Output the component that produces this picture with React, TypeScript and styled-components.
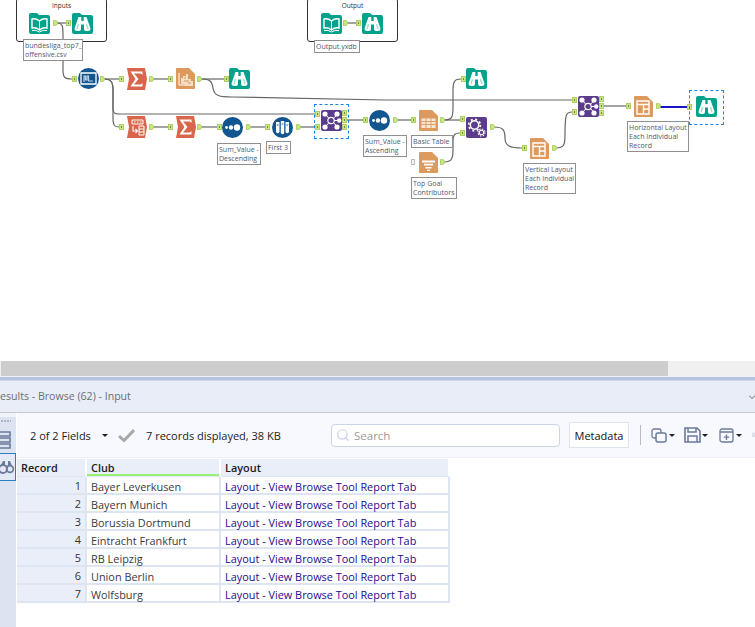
import React from "react";
import styled, { createGlobalStyle } from "styled-components";
import { Search } from "lucide-react";

const GlobalStyle = createGlobalStyle`
	html, body {
		margin: 0;
		padding: 0;
		background: #fff;
	}
	* {
		box-sizing: border-box;
	}
`;

const Page = styled.div`
	width: 755px;
	height: 627px;
	overflow: hidden;
	display: flex;
	flex-direction: column;
	font-family: "Open Sans", "Liberation Sans", sans-serif;
	background: #fff;
`;

/* workflow canvas */
const Canvas = styled.div`
	position: relative;
	height: 361px;
	flex: none;
	overflow: hidden;
`;

const Wires = styled.svg`
	position: absolute;
	left: 0;
	top: 0;
`;

const Container = styled.div<{ $x: number; $w: number }>`
	position: absolute;
	left: ${(p) => p.$x}px;
	top: -2px;
	width: ${(p) => p.$w}px;
	height: 44px;
	border: 1.5px solid #333;
	border-radius: 3px;
	text-align: center;
	font-size: 6.5px;
	line-height: 8px;
	padding-top: 3px;
	color: #333;
`;

const Node = styled.div<{ $x: number; $y: number }>`
	position: absolute;
	left: ${(p) => p.$x}px;
	top: ${(p) => p.$y}px;
	display: flex;
`;

const Port = styled.div<{ $x: number; $y: number; $out?: boolean }>`
	position: absolute;
	left: ${(p) => p.$x}px;
	top: ${(p) => p.$y - 3}px;
	width: 5px;
	height: 6px;
	background: #cbe683;
	border: 1px solid #acd267;
	border-radius: ${(p) => (p.$out ? "0 3px 3px 0" : "0")};
	&::after {
		content: "";
		display: ${(p) => (p.$out ? "none" : "block")};
		width: 1px;
		height: 2px;
		margin: 1px;
		background: #6f8c3c;
	}
`;

const EmptyPort = styled.div`
	position: absolute;
	left: 411px;
	top: 159px;
	width: 4px;
	height: 6px;
	border: 1px solid #bbb;
	background: #f4f4f4;
`;

const Label = styled.div<{ $x: number; $y: number; $w: number }>`
	position: absolute;
	left: ${(p) => p.$x}px;
	top: ${(p) => p.$y}px;
	width: ${(p) => p.$w}px;
	border: 1px solid #8f8f8f;
	background: #fff;
	padding: 1px;
	font-size: 7px;
	line-height: 9px;
	color: #4f5a6e;
	white-space: pre;
	overflow: hidden;
`;

const Selection = styled.div<{ $x: number; $y: number }>`
	position: absolute;
	left: ${(p) => p.$x}px;
	top: ${(p) => p.$y}px;
	width: 35px;
	height: 35px;
	border: 1px dashed #1f86e0;
`;

/* scroll bar */
const ScrollTrack = styled.div`
	height: 16px;
	flex: none;
	background: #f0f0f0;
	padding-left: 1px;
`;

const ScrollThumb = styled.div`
	width: 667px;
	height: 15px;
	background: #cdcdcd;
`;

const Splitter = styled.div`
	height: 4px;
	flex: none;
	background: #b5c4e1;
	border-bottom: 1px solid #cfd8ea;
`;

/* results panel */
const ResultsHeader = styled.div`
	height: 32px;
	flex: none;
	background: #e9edf8;
	border-bottom: 1px solid #c9c9c9;
	display: flex;
	align-items: center;
	justify-content: space-between;
	overflow: hidden;
`;

const ResultsTitle = styled.div`
	font-size: 10.6px;
	color: #6d6d6d;
	margin-top: -1px;
`;

const Body = styled.div`
	flex: 1;
	display: flex;
	background: #fff;
	min-height: 0;
`;

const Rail = styled.div`
	width: 16px;
	flex: none;
	background: #dde3f0;
	padding-top: 3px;
	display: flex;
	flex-direction: column;
	border-top: 4px solid #f2f4fb;
`;

const Grip = styled.div`
	width: 10px;
	height: 2px;
	margin-left: 1px;
	background: repeating-linear-gradient(90deg, #aeb4c2 0 2px, transparent 2px 3px);
`;

const RailList = styled.svg`
	margin-top: 9px;
	display: block;
`;

const RailActive = styled.div`
	margin-top: 4px;
	height: 28px;
	width: 16px;
	border: 1px solid #2a7ec4;
	border-left: 0;
	background: #e4e9f5;
	display: flex;
	align-items: center;
	overflow: hidden;
`;

const Main = styled.div`
	flex: 1;
	min-width: 0;
	padding-left: 1px;
	display: flex;
	flex-direction: column;
`;

const Toolbar = styled.div`
	height: 45px;
	flex: none;
	background: #f7f9fe;
	border-bottom: 1px solid #edf0f7;
	display: flex;
	align-items: center;
	padding: 0 0 0 13px;
	font-size: 11px;
	color: #222;
	overflow: hidden;
`;

const Caret = styled.span<{ $ml?: number }>`
	width: 0;
	height: 0;
	flex: none;
	margin-left: ${(p) => p.$ml ?? 3}px;
	border-left: 3px solid transparent;
	border-right: 3px solid transparent;
	border-top: 3px solid #222;
`;

const Fields = styled.span`
	width: 63px;
	flex: none;
	white-space: nowrap;
`;

const Check = styled.svg`
	margin-left: 10px;
	flex: none;
`;

const Records = styled.span`
	margin-left: 11px;
	width: 185px;
	flex: none;
	white-space: nowrap;
`;

const SearchBox = styled.div`
	width: 229px;
	height: 23px;
	flex: none;
	background: #fff;
	border: 1px solid #ccd5e8;
	border-radius: 4px;
	display: flex;
	align-items: center;
	gap: 4px;
	padding-left: 4px;
	color: #9a9a9a;
	font-size: 11.5px;
`;

const MetadataButton = styled.div`
	width: 60px;
	height: 26px;
	flex: none;
	margin-left: 9px;
	background: #fff;
	border: 1px solid #dde3f0;
	display: flex;
	align-items: center;
	justify-content: center;
	font-size: 11px;
	color: #111;
`;

const Separator = styled.div`
	width: 1px;
	height: 20px;
	flex: none;
	margin: 0 10px 0 11px;
	background: #bcbcbc;
`;

const ToolGroup = styled.div<{ $mr: number }>`
	display: flex;
	align-items: center;
	flex: none;
	margin-right: ${(p) => p.$mr}px;
`;

const Table = styled.div`
	margin-top: 1px;
	display: grid;
	grid-template-columns: 70px 134px 229px;
	grid-auto-rows: 18px;
	width: 433px;
	font-size: 10.9px;
`;

const HeadCell = styled.div<{ $sorted?: boolean }>`
	background: #e9eef9;
	border-right: 2px solid #fff;
	border-bottom: 1px solid #dde4f2;
	padding-left: 4px;
	line-height: 18px;
	font-weight: 600;
	color: #222;
	box-shadow: ${(p) => (p.$sorted ? "inset 0 -2px 0 #9bef7c" : "none")};
`;

const RowNumber = styled.div`
	background: #e9eef9;
	border-right: 2px solid #dde4f2;
	border-bottom: 2px solid #dde4f2;
	text-align: right;
	padding-right: 4px;
	line-height: 18px;
	color: #333;
`;

const Cell = styled.div<{ $link?: boolean }>`
	background: #fff;
	border-right: 2px solid #dde4f2;
	border-bottom: 2px solid #dde4f2;
	padding: 1px 0 0 4px;
	line-height: 18px;
	white-space: nowrap;
	color: ${(p) => (p.$link ? "#230a8e" : "#3a3a44")};
`;

const TEAL = "#04a28c";
const RED = "#d9664a";
const ORANGE = "#dd9a5c";
const BLUE = "#13558f";
const PURPLE = "#5b3c8c";

const folder = "M0 2Q0 0 2 0H8L10 2H19Q21 2 21 4V19Q21 21 19 21H2Q0 21 0 19Z";
const banner = "M1 0H19L21 11L19 22H1L3 11Z";
const page = "M0 1Q0 0 1 0H13L19 6V20Q19 21 18 21H1Q0 21 0 20Z";

const icons: Record<string, React.ReactNode> = {
	book: (
		<svg width="21" height="21" viewBox="0 0 21 21">
			<path d={folder} fill={TEAL} />
			<path d="M3 6Q7 5 10.5 8Q14 5 18 6V15Q14 14 10.5 17Q7 14 3 15Z" fill="none" stroke="#fff" strokeWidth="1.4" />
			<path d="M10.5 8V17M3 17.5Q7 16.5 10.5 19Q14 16.5 18 17.5" fill="none" stroke="#fff" strokeWidth="1" />
		</svg>
	),
	browse: (
		<svg width="21" height="21" viewBox="0 0 21 21">
			<path d={folder} fill={TEAL} />
			<path
				d="M6.5 4H9.3V8H11.7V4H14.5L18.5 15.5Q18.5 18 15.5 18H14Q12 18 12 16V11.5H9V16Q9 18 7 18H5.5Q2.5 18 2.5 15.5Z"
				fill="#fff"
			/>
			<path d="M6.5 11L5 16M14.5 11L16 16" stroke="#9fdcd2" strokeWidth="1.3" />
		</svg>
	),
	dynamic: (
		<svg width="21" height="21" viewBox="0 0 21 21">
			<circle cx="10.5" cy="10.5" r="10.5" fill={BLUE} />
			<path d="M3 5H18V16H3Z" fill="none" stroke="#fff" strokeWidth="1.3" />
			<path d="M6 14V8H7.5V12H9V8H10.5V13H15" fill="none" stroke="#b9d3ea" strokeWidth="1.2" />
		</svg>
	),
	sigma: (
		<svg width="21" height="22" viewBox="0 0 21 22">
			<path d={banner} fill={RED} />
			<path d="M4.5 3.5H16.5V7L15 5.5H8L12.5 11L8 16.5H15L16.5 15V18.5H4.5L9.5 11Z" fill="#fff" />
		</svg>
	),
	crosstab: (
		<svg width="21" height="22" viewBox="0 0 21 22">
			<path d={banner} fill={RED} />
			<path d="M6 4H17V8H6Z" fill="none" stroke="#fff" strokeWidth="1" />
			<path d="M8 6H9.5M11 6H12.5M14 6H15.5" stroke="#fff" strokeWidth="1.2" />
			<path d="M7 10V15H11M9.5 13L11.5 15L9.5 17" fill="none" stroke="#fff" strokeWidth="1.1" />
			<path d="M13 10H18V19H13ZM13 13H18M13 16H18" fill="none" stroke="#fff" strokeWidth="1" />
		</svg>
	),
	report: (
		<svg width="19" height="21" viewBox="0 0 19 21">
			<path d={page} fill={ORANGE} />
			<path d="M3 5V17H13" fill="none" stroke="#fff" strokeWidth="1" />
			<path d="M5 16V10H7V8H10V6H12V11H15V13H17V18H8V16Z" fill="#f5dcc3" />
			<path d="M8 10H10M8 13H13M12 15H15" stroke={ORANGE} strokeWidth="1" />
		</svg>
	),
	table: (
		<svg width="19" height="21" viewBox="0 0 19 21">
			<path d={page} fill={ORANGE} />
			<path d="M2.5 8.5H16.5V18H2.5Z" fill="#f7e6d4" />
			<path d="M2.5 11.5H16.5M2.5 14.5H16.5M7 8.5V18M12 8.5V18" stroke={ORANGE} strokeWidth="0.9" />
		</svg>
	),
	summary: (
		<svg width="19" height="21" viewBox="0 0 19 21">
			<path d={page} fill={ORANGE} />
			<path d="M3 8.5H16V10.5H3ZM5 11.8H14V13.6H5ZM6.5 15H12.5V16.6H6.5ZM8 17.8H11V19H8Z" fill="#fff" />
		</svg>
	),
	layout: (
		<svg width="19" height="21" viewBox="0 0 19 21">
			<path d={page} fill={ORANGE} />
			<path d="M3 5H15V18H3Z" fill="none" stroke="#fff" strokeWidth="1.4" />
			<path d="M3 8.5H15M9.5 8.5V18M9.5 13H15" stroke="#fff" strokeWidth="1.4" />
		</svg>
	),
	sort: (
		<svg width="21" height="21" viewBox="0 0 21 21">
			<circle cx="10.5" cy="10.5" r="10.5" fill={BLUE} />
			<circle cx="4.5" cy="10.5" r="1.4" fill="#fff" />
			<circle cx="9" cy="10.5" r="2.2" fill="#fff" />
			<circle cx="15" cy="10.5" r="3.2" fill="#fff" />
		</svg>
	),
	sample: (
		<svg width="21" height="21" viewBox="0 0 21 21">
			<circle cx="10.5" cy="10.5" r="10.5" fill={BLUE} />
			<path d="M4 5H7.5V15Q5.75 17.5 4 15ZM8.8 4H12.2V16Q10.5 18.5 8.8 16ZM13.5 5H17V15Q15.25 17.5 13.5 15Z" fill="#fff" />
			<path d="M4.8 8H6.7M9.6 7H11.4M14.3 8H16.2" stroke={BLUE} strokeWidth="0.9" />
		</svg>
	),
	union: (
		<svg width="21" height="21" viewBox="0 0 21 21">
			<rect width="21" height="21" rx="2" fill={PURPLE} />
			<path d="M4 4L10 10.5L4 17M17 4L10 10.5L17 17M10 10.5H19" stroke="#fff" strokeWidth="1" fill="none" />
			<circle cx="4" cy="4" r="2.6" fill="#fff" />
			<circle cx="4" cy="17" r="2.6" fill="#fff" />
			<circle cx="16" cy="4" r="2.6" fill="#fff" />
			<circle cx="16" cy="17" r="2.6" fill="#fff" />
			<circle cx="18.2" cy="10.5" r="2.2" fill="#fff" />
			<circle cx="10" cy="10.5" r="3.2" fill={PURPLE} stroke="#fff" strokeWidth="1.2" />
		</svg>
	),
	gear: (
		<svg width="21" height="21" viewBox="0 0 21 21">
			<rect width="21" height="21" rx="2" fill={PURPLE} />
			<circle cx="8.5" cy="8" r="4.2" fill="none" stroke="#fff" strokeWidth="1.5" />
			<circle cx="8.5" cy="8" r="5.8" fill="none" stroke="#fff" strokeWidth="1.7" strokeDasharray="2 2.55" />
			<circle cx="15.5" cy="15.5" r="2.2" fill="none" stroke="#fff" strokeWidth="1.1" />
			<circle cx="15.5" cy="15.5" r="3.5" fill="none" stroke="#fff" strokeWidth="1.1" strokeDasharray="1.4 1.35" />
		</svg>
	),
};

const nodes = [
	{ icon: "book", x: 29, y: 13 },
	{ icon: "browse", x: 72, y: 13 },
	{ icon: "book", x: 321, y: 13 },
	{ icon: "browse", x: 362, y: 13 },
	{ icon: "dynamic", x: 78, y: 68 },
	{ icon: "sigma", x: 126, y: 68 },
	{ icon: "report", x: 176, y: 68 },
	{ icon: "browse", x: 229, y: 68 },
	{ icon: "crosstab", x: 126, y: 116 },
	{ icon: "sigma", x: 175, y: 116 },
	{ icon: "sort", x: 222, y: 117 },
	{ icon: "sample", x: 272, y: 117 },
	{ icon: "union", x: 321, y: 110 },
	{ icon: "sort", x: 369, y: 110 },
	{ icon: "table", x: 419, y: 110 },
	{ icon: "summary", x: 419, y: 152 },
	{ icon: "browse", x: 466, y: 68 },
	{ icon: "gear", x: 466, y: 117 },
	{ icon: "layout", x: 530, y: 138 },
	{ icon: "union", x: 578, y: 96 },
	{ icon: "layout", x: 634, y: 96 },
	{ icon: "browse", x: 696, y: 96 },
];

// [x, y, isOutput]
const ports: [number, number, boolean][] = [
	[53, 23, true], [66, 23, false], [343, 23, true], [356, 23, false],
	[72, 79, false], [100, 79, true], [119, 79, false], [149, 79, true],
	[168, 79, false], [197, 79, true], [224, 79, false],
	[119, 127, false], [149, 127, true], [168, 127, false], [197, 127, true],
	[217, 127, false], [246, 127, true], [265, 127, false], [296, 127, true],
	[315, 114, false], [315, 127, false], [342, 113, false], [342, 120, false], [342, 127, false],
	[363, 120, false], [393, 120, true], [411, 120, false], [440, 120, true],
	[440, 162, true], [461, 79, false], [460, 119, false], [460, 133, false], [490, 127, true],
	[522, 148, false], [552, 148, true], [572, 100, false], [572, 112, false],
	[599, 99, false], [599, 106, false], [599, 113, false],
	[626, 106, false], [656, 106, true], [687, 107, false],
];

const wires = [
	"M56 23H66",
	"M56 23C63 23 63 26 63 35V70C63 78 65 79 72 79",
	"M347 23H356",
	"M104 79H119",
	"M104 79C111 79 113 82 113 90V108C113 113 114 114 120 114H315",
	"M104 79C111 79 113 82 113 90V118C113 126 115 127 119 127",
	"M153 79H168",
	"M201 79H224",
	"M201 79C211 79 212 82 213 88C214 96 220 97 232 97L385 100H572",
	"M153 127H168",
	"M201 127H217",
	"M250 127H265",
	"M300 127H315",
	"M347 120H363",
	"M397 120H411",
	"M444 120H460",
	"M444 120C452 120 453 117 453 108V90C453 81 455 79 461 79",
	"M444 162C452 162 453 158 453 150V142C453 134 455 133 460 133",
	"M494 127C503 127 505 130 505 138C505 146 510 148 522 148",
	"M556 148C564 148 565 145 565 135C565 114 566 112 572 112",
	"M603 106H626",
];

const labels = [
	{ x: 23, y: 39, w: 60, text: "bundesliga_top7_\noffensive.csv" },
	{ x: 314, y: 40, w: 46, text: "Output.yxdb" },
	{ x: 217, y: 143, w: 44, text: "Sum_Value -\nDescending" },
	{ x: 266, y: 141, w: 25, text: "First 3" },
	{ x: 363, y: 135, w: 44, text: "Sum_Value -\nAscending" },
	{ x: 411, y: 135, w: 42, text: "Basic Table" },
	{ x: 411, y: 177, w: 46, text: "Top Goal\nContributors" },
	{ x: 523, y: 163, w: 53, text: "Vertical Layout\nEach Individual\nRecord" },
	{ x: 627, y: 121, w: 62, text: "Horizontal Layout\nEach Individual\nRecord" },
];

const clubs = [
	"Bayer Leverkusen",
	"Bayern Munich",
	"Borussia Dortmund",
	"Eintracht Frankfurt",
	"RB Leipzig",
	"Union Berlin",
	"Wolfsburg",
];

const TOOL = "#6c7a99";

export default function App() {
	return (
		<Page>
			<GlobalStyle />
			<Canvas>
				<Container $x={16} $w={91}>Inputs</Container>
				<Container $x={307} $w={91}>Output</Container>
				<Wires width="755" height="361" fill="none" stroke="#666" strokeWidth="1.2">
					{wires.map((d) => (
						<path key={d} d={d} />
					))}
					<path d="M660 107H688" stroke="#1a14c8" strokeWidth="2" />
				</Wires>
				{labels.map((l) => (
					<Label key={l.text} $x={l.x} $y={l.y} $w={l.w}>
						{l.text}
					</Label>
				))}
				{nodes.map((n) => (
					<Node key={`${n.icon}${n.x}${n.y}`} $x={n.x} $y={n.y}>
						{icons[n.icon]}
					</Node>
				))}
				{ports.map(([x, y, out]) => (
					<Port key={`${x}-${y}`} $x={x} $y={y} $out={out} />
				))}
				<EmptyPort />
				<Selection $x={314} $y={104} />
				<Selection $x={689} $y={90} />
			</Canvas>
			<ScrollTrack>
				<ScrollThumb />
			</ScrollTrack>
			<Splitter />
			<ResultsHeader>
				<ResultsTitle>esults - Browse (62) - Input</ResultsTitle>
				<svg width="6" height="6" viewBox="0 0 6 6">
					<path d="M0 1.5L3 4.5L6 1.5" fill="none" stroke="#666" />
				</svg>
			</ResultsHeader>
			<Body>
				<Rail>
					<Grip />
					<RailList width="11" height="18" viewBox="0 0 11 18">
						<path d="M0 1H10V5H0M0 7H10V11H0M0 13H10V17H0" fill="none" stroke={TOOL} strokeWidth="1.6" />
					</RailList>
					<RailActive>
						<svg width="14" height="15" viewBox="0 0 14 15">
							<circle cx="3" cy="9" r="4" fill="none" stroke={TOOL} strokeWidth="1.8" />
							<circle cx="10" cy="9" r="3.4" fill="none" stroke={TOOL} strokeWidth="1.8" />
							<path d="M1 5L3 1H5V6H8V1H10L12 6" fill={TOOL} />
						</svg>
					</RailActive>
				</Rail>
				<Main>
					<Toolbar>
						<Fields>2 of 2 Fields</Fields>
						<Caret $ml={9} />
						<Check width="17" height="14" viewBox="0 0 17 14">
							<path d="M1 8L6 12.5L16 2" fill="none" stroke="#a8a8a8" strokeWidth="3" />
						</Check>
						<Records>7 records displayed, 38 KB</Records>
						<SearchBox>
							<Search size={14} color="#c5d0e6" />
							Search
						</SearchBox>
						<MetadataButton>Metadata</MetadataButton>
						<Separator />
						<ToolGroup $mr={9}>
							<svg width="17" height="15" viewBox="0 0 17 15">
								<rect x="1" y="1" width="9" height="9" rx="2" fill="none" stroke={TOOL} strokeWidth="1.3" />
								<rect x="5" y="5" width="10" height="9" rx="2" fill="#f7f9fe" stroke={TOOL} strokeWidth="1.5" />
							</svg>
							<Caret $ml={1} />
						</ToolGroup>
						<ToolGroup $mr={11}>
							<svg width="17" height="16" viewBox="0 0 17 16">
								<path d="M1 1H13L16 4V15H1Z" fill="none" stroke={TOOL} strokeWidth="1.6" />
								<path d="M4 1V5H12V1M4 15V9H13V15" fill="none" stroke={TOOL} strokeWidth="1.5" />
							</svg>
							<Caret $ml={1} />
						</ToolGroup>
						<ToolGroup $mr={10}>
							<svg width="15" height="15" viewBox="0 0 15 15">
								<rect x="1" y="1" width="13" height="13" rx="2" fill="none" stroke={TOOL} strokeWidth="1.3" />
								<path d="M1 4H14M7.5 6.5V12M4.8 9.2H10.2" stroke={TOOL} strokeWidth="1.3" />
							</svg>
							<Caret $ml={2} />
						</ToolGroup>
						<svg width="8" height="12" viewBox="0 0 8 12">
							<path d="M0 1H8M0 4H8M0 7H8M0 10H8" stroke="#b8bfcc" strokeWidth="1.3" />
						</svg>
					</Toolbar>
					<Table>
						<HeadCell>Record</HeadCell>
						<HeadCell $sorted>Club</HeadCell>
						<HeadCell>Layout</HeadCell>
						{clubs.map((club, i) => (
							<React.Fragment key={club}>
								<RowNumber>{i + 1}</RowNumber>
								<Cell>{club}</Cell>
								<Cell $link>Layout - View Browse Tool Report Tab</Cell>
							</React.Fragment>
						))}
					</Table>
				</Main>
			</Body>
		</Page>
	);
}
